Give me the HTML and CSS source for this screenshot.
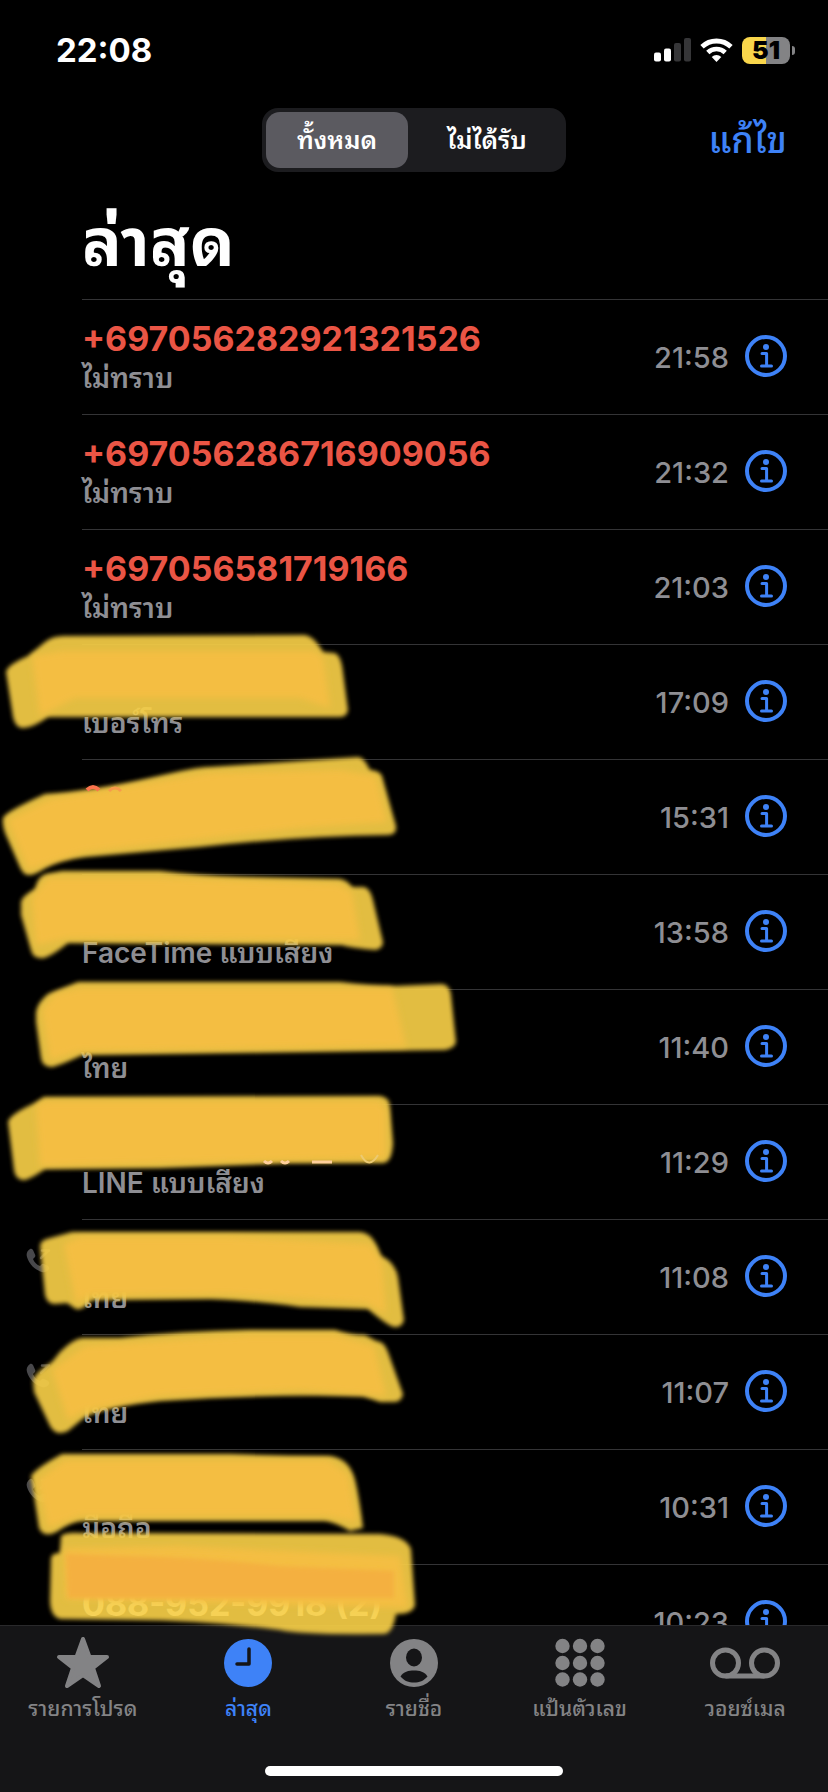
FILE: index.html
```html
<!DOCTYPE html>
<html lang="th">
<head>
<meta charset="utf-8">
<meta name="viewport" content="width=device-width, initial-scale=1">
<title>ล่าสุด</title>
<link rel="stylesheet" href="styles.css">
</head>
<body>
<svg width="0" height="0" class="defs" aria-hidden="true">
  <symbol id="info" viewBox="0 0 42 42">
    <circle cx="21" cy="21" r="19" fill="none" stroke="currentColor" stroke-width="4"/>
    <circle cx="21" cy="12" r="3" fill="currentColor"/>
    <path d="M17 18.500h4.600v12M16.500 31h10" fill="none" stroke="currentColor" stroke-width="3" stroke-linecap="round" stroke-linejoin="round"/>
  </symbol>
  <symbol id="phone" viewBox="0 0 26 26">
    <path d="M4 1C1 3 0 6 1 9c2 7 8 13 15 15 3 1 6-1 7-3 .5-1 0-2-1-3l-4-2c-1-.6-2-.4-3 1l-1 1c-3-1-6-4-7-7l1.500-1.500C9.500 8.500 9.500 7.500 9 6.500L7 2C6 .5 5 .4 4 1z" fill="currentColor"/>
    <path d="M15 10l7-7M16 2.500h7" stroke="currentColor" stroke-width="2.500" stroke-linecap="round"/>
  </symbol>
</svg>
<div class="screen">
  <header class="status">
    <span class="clock">22:08</span>
    <span class="status-icons">
      <svg width="37" height="24" viewBox="0 0 37 24" aria-hidden="true">
        <rect x="0" y="14.500" width="7" height="9" rx="2" fill="#fff"/>
        <rect x="10" y="10.500" width="7" height="13" rx="2" fill="#fff"/>
        <rect x="20" y="5" width="7" height="18.500" rx="2" fill="#363638"/>
        <rect x="30" y="0" width="7" height="23.500" rx="2" fill="#363638"/>
      </svg>
      <svg width="33" height="24" viewBox="0 0 33 24" aria-hidden="true">
        <path d="M2 8.800a21 21 0 0 1 29 0" fill="none" stroke="#fff" stroke-width="4.800"/>
        <path d="M7.800 14.500a12.500 12.500 0 0 1 17.400 0" fill="none" stroke="#fff" stroke-width="4.600"/>
        <path d="M16.500 24l-4.800-5a7 7 0 0 1 9.600 0z" fill="#fff"/>
      </svg>
      <span class="battery">51</span>
    </span>
  </header>

  <div class="toolbar">
    <fieldset class="segments">
      <input type="radio" name="filter" id="all" checked><label for="all">ทั้งหมด</label>
      <input type="radio" name="filter" id="missed"><label for="missed">ไม่ได้รับ</label>
    </fieldset>
    <button class="edit" type="button">แก้ไข</button>
  </div>

  <h1>ล่าสุด</h1>

  <main class="calls">
    <article class="call"><div class="who"><strong class="missed">+697056282921321526</strong><span>ไม่ทราบ</span></div><time>21:58</time><button type="button" aria-label="ข้อมูล"><svg><use href="#info"/></svg></button></article>
    <article class="call"><div class="who"><strong class="missed">+697056286716909056</strong><span>ไม่ทราบ</span></div><time>21:32</time><button type="button" aria-label="ข้อมูล"><svg><use href="#info"/></svg></button></article>
    <article class="call"><div class="who"><strong class="missed">+697056581719166</strong><span>ไม่ทราบ</span></div><time>21:03</time><button type="button" aria-label="ข้อมูล"><svg><use href="#info"/></svg></button></article>
    <article class="call"><div class="who"><strong></strong><span>เบอร์โทร</span></div><time>17:09</time><button type="button" aria-label="ข้อมูล"><svg><use href="#info"/></svg></button></article>
    <article class="call"><div class="who"><strong></strong><span></span></div><time>15:31</time><button type="button" aria-label="ข้อมูล"><svg><use href="#info"/></svg></button></article>
    <article class="call"><div class="who"><strong></strong><span>FaceTime แบบเสียง</span></div><time>13:58</time><button type="button" aria-label="ข้อมูล"><svg><use href="#info"/></svg></button></article>
    <article class="call"><div class="who"><strong></strong><span>ไทย</span></div><time>11:40</time><button type="button" aria-label="ข้อมูล"><svg><use href="#info"/></svg></button></article>
    <article class="call"><div class="who"><strong></strong><span>LINE แบบเสียง</span></div><time>11:29</time><button type="button" aria-label="ข้อมูล"><svg><use href="#info"/></svg></button></article>
    <article class="call"><svg class="outgoing"><use href="#phone"/></svg><div class="who"><strong></strong><span>ไทย</span></div><time>11:08</time><button type="button" aria-label="ข้อมูล"><svg><use href="#info"/></svg></button></article>
    <article class="call"><svg class="outgoing"><use href="#phone"/></svg><div class="who"><strong></strong><span>ไทย</span></div><time>11:07</time><button type="button" aria-label="ข้อมูล"><svg><use href="#info"/></svg></button></article>
    <article class="call"><svg class="outgoing"><use href="#phone"/></svg><div class="who"><strong></strong><span>มือถือ</span></div><time>10:31</time><button type="button" aria-label="ข้อมูล"><svg><use href="#info"/></svg></button></article>
    <article class="call"><div class="who"><strong>088-952-9918 (2)</strong><span></span></div><time>10:23</time><button type="button" aria-label="ข้อมูล"><svg><use href="#info"/></svg></button></article>
  </main>

  <nav class="tabs">
    <a href="#favorites"><svg viewBox="0 0 70 54" aria-hidden="true"><path d="M35 4l6.500 18H59L45 33l6 18-16-11-16 11 6-18L11 22h17.500z" fill="currentColor" stroke="currentColor" stroke-width="4" stroke-linejoin="round"/></svg>รายการโปรด</a>
    <a href="#recents" class="active" aria-current="page"><svg viewBox="0 0 70 54" aria-hidden="true"><circle cx="35" cy="28" r="24" fill="currentColor"/><path d="M36 14v15H24" fill="none" stroke="#151517" stroke-width="3.500" stroke-linecap="round" stroke-linejoin="round"/></svg>ล่าสุด</a>
    <a href="#contacts"><svg viewBox="0 0 70 54" aria-hidden="true"><circle cx="35" cy="28" r="24" fill="currentColor"/><ellipse cx="35" cy="22.500" rx="8" ry="9" fill="#151517"/><path d="M21.500 41.500c3-5 8-6 13.500-6s10.500 1 13.500 6c-4 4.500-8 6-13.500 6s-9.500-1.500-13.500-6z" fill="#151517"/></svg>รายชื่อ</a>
    <a href="#keypad"><svg viewBox="0 0 70 54" aria-hidden="true"><g fill="currentColor"><circle cx="17.500" cy="11" r="7.200"/><circle cx="35" cy="11" r="7.200"/><circle cx="52.500" cy="11" r="7.200"/><circle cx="17.500" cy="28" r="7.200"/><circle cx="35" cy="28" r="7.200"/><circle cx="52.500" cy="28" r="7.200"/><circle cx="17.500" cy="44.500" r="7.200"/><circle cx="35" cy="44.500" r="7.200"/><circle cx="52.500" cy="44.500" r="7.200"/></g></svg>แป้นตัวเลข</a>
    <a href="#voicemail"><svg viewBox="0 0 70 54" aria-hidden="true"><g fill="none" stroke="currentColor" stroke-width="5"><circle cx="15.500" cy="28" r="13"/><circle cx="54.500" cy="28" r="13"/><path d="M15.500 41h39"/></g></svg>วอยซ์เมล</a>
  </nav>
  <div class="home"></div>

  <svg class="marker" viewBox="0 0 480 1792" aria-hidden="true">
    <defs>
      <filter id="soft" x="-5%" y="-5%" width="110%" height="110%"><feGaussianBlur stdDeviation="1.900"/></filter>
      <filter id="softer" x="-5%" y="-20%" width="110%" height="140%"><feGaussianBlur stdDeviation="3"/></filter>
    </defs>
    <g class="edge" filter="url(#soft)">
      <path d="M6 672Q7 665 28 656L45 642Q52 636 64 636L305 635Q314 636 323 652L334 653Q341 654 343 672L348 710Q347 717 340 717L48 717Q31 729 22 728 15 727 13 717Z"/>
      <path d="M3 818Q5 812 45 794 90 792 150 778 200 766 210 767L358 757Q364 757 370 770 380 771 382 776L396 826Q397 835 388 835 300 836 200 847L85 857Q60 859 45 868 35 875 30 875 23 876 19 865L5 833Q2 824 3 818Z"/>
      <path d="M21 902Q22 896 35 889 38 876 46 874L62 871H160Q200 876 240 877L340 879Q347 880 352 887L364 887Q370 888 373 900L383 942Q383 948 376 950 350 948 342 945L68 943Q47 960 40 958 32 957 31 950L21 915Z"/>
      <path d="M36 1012Q38 1002 48 994L78 982 340 982Q370 986 395 986L442 984Q450 985 451 995L456 1042Q455 1048 445 1050L82 1055Q55 1068 50 1067 42 1066 41 1058L36 1022Z"/>
      <path d="M8 1122Q10 1114 35 1103L44 1097 380 1096Q390 1097 390 1108L393 1143Q392 1162 383 1163L290 1163 160 1168 45 1169Q28 1181 22 1180 15 1178 14 1170Z"/>
      <path d="M40 1246Q40 1240 50 1238L72 1232H360Q370 1232 377 1246L381 1256Q395 1262 398 1277L404 1320Q402 1328 394 1327 388 1326 368 1309L300 1307Q250 1300 210 1299L92 1300Q82 1311 76 1309L67 1303 55 1304Q47 1304 45 1295Z"/>
      <path d="M33 1380Q36 1372 52 1362L60 1352Q73 1339 82 1338L120 1338Q180 1331 250 1330L335 1330Q350 1335 365 1335L376 1341Q384 1341 388 1352L403 1394Q402 1401 395 1402L380 1402 363 1396Q260 1394 160 1401 110 1405 85 1417L68 1431Q56 1437 50 1426L34 1392Z"/>
      <path d="M31 1476Q36 1468 62 1454L230 1454Q280 1456 330 1456 346 1458 352 1472 357 1480 363 1528L350 1531Q335 1522 325 1521L82 1521Q72 1521 58 1531 44 1539 39 1528Z"/>
      <path d="M61 1536Q66 1532 80 1533L380 1534Q406 1536 411 1549L415 1605Q413 1614 396 1614 393 1633 384 1634 300 1635 280 1630 200 1620 130 1620L60 1619Q50 1616 50 1600L51 1558Q52 1553 60 1553Z"/>
    </g>
    <g fill="#f4be42" filter="url(#softer)">
      <path d="M32 656L62 651H315L323 658 330 708 300 698H75L40 716Z"/>
      <path d="M8 820L50 799 210 773 340 770 376 776 387 822 300 828 85 852 28 870Z"/>
      <path d="M32 898L48 878H160L338 884 352 892 360 940 68 938 36 945Z"/>
      <path d="M42 1010L55 994 80 988H392L406 1046 80 1051 50 1060Z"/>
      <path d="M36 1105L46 1101H380L386 1110V1158L160 1163 40 1166Z"/>
      <path d="M64 1244L80 1237H230L370 1244 382 1262 386 1314 366 1303 230 1294 90 1295 76 1304Z"/>
      <path d="M52 1370L85 1346 250 1335H335L374 1346 386 1396 300 1390 160 1396 84 1411 68 1420Z"/>
      <path d="M38 1480L65 1460H328L348 1474 357 1522 325 1516H80L48 1528Z"/>
      <path d="M64 1548L180 1546 400 1556 408 1608 200 1602 66 1599Z"/>
    </g>
    <path d="M66 1554L120 1556Q200 1557 280 1566L394 1571V1598H68Z" fill="#f4b03f" filter="url(#soft)"/>
    <path d="M87 790Q93 784 99 790" fill="none" stroke="#fb744d" stroke-width="4"/>
    <path d="M109 791Q115 785 121 791" fill="none" stroke="#f89a4c" stroke-width="3"/>
    <path d="M264 1161q4 4 8 0M281 1161q4 4 8 0M312 1162h20" fill="none" stroke="#ffcf9b" stroke-width="3"/>
    <path d="M361 1155q8 15 17 0" fill="none" stroke="#ecca72" stroke-width="2"/>
  </svg>
</div>
</body>
</html>
```
FILE: styles.css
```css
* { box-sizing: border-box; }
body {
  margin: 0;
  background: #000;
  color: #fff;
  font-family: Inter, "Noto Sans Thai Looped", Loma, Waree, Garuda, "Noto Sans Thai", "Noto Sans", sans-serif;
}
button { padding: 0; border: 0; background: none; font: inherit; cursor: pointer; }
.defs { position: absolute; }
.screen {
  position: relative;
  display: flex;
  flex-direction: column;
  height: 100vh;
  overflow: hidden;
}
.status {
  display: flex;
  justify-content: space-between;
  align-items: center;
  height: 100px;
  padding: 0 38px 0 56px;
}
.clock { font-size: 33px; font-weight: 700; }
.status-icons { display: flex; align-items: center; gap: 9px; }
.battery {
  position: relative;
  width: 48px;
  height: 27px;
  border-radius: 8px;
  background: linear-gradient(90deg, #f9d64b 50%, #838385 50%);
  color: #000;
  font-size: 25px;
  font-weight: 900;
  line-height: 27px;
  text-align: center;
}
.battery::after {
  content: "";
  position: absolute;
  top: 9px;
  right: -5px;
  width: 3px;
  height: 9px;
  border-radius: 0 4px 4px 0;
  background: #838385;
}
.toolbar {
  display: grid;
  grid-template-columns: 1fr auto 1fr;
  align-items: center;
  height: 80px;
  padding: 0 41px;
}
.segments {
  display: grid;
  grid-column: 2;
  grid-template-columns: 142px 150px;
  gap: 4px;
  margin: 0;
  padding: 4px;
  border: 0;
  border-radius: 16px;
  background: #1c1c1f;
}
.segments input { position: absolute; opacity: 0; }
.segments label {
  height: 56px;
  border-radius: 14px;
  font-size: 25px;
  font-weight: 600;
  line-height: 56px;
  text-align: center;
}
.segments input:checked + label { background: #5b5a60; }
.edit {
  justify-self: end;
  color: #3e82f7;
  font-size: 36px;
  font-weight: 500;
  line-height: 56px;
}
h1 {
  height: 119px;
  margin: 0;
  padding-left: 82px;
  font-size: 66px;
  font-weight: 700;
  line-height: 124px;
}
.calls { flex: 1; min-height: 0; overflow: hidden; }
.call {
  position: relative;
  display: flex;
  align-items: flex-start;
  height: 115px;
  margin-left: 82px;
  padding-right: 41px;
  border-top: 1px solid #343436;
}
.who { display: flex; flex: 1; flex-direction: column; padding-top: 20px; }
.who strong { height: 38px; font-size: 34px; font-weight: 700; line-height: 38px; }
.who span { height: 40px; color: #8e8e93; font-size: 28px; font-weight: 600; line-height: 40px; }
.who .missed { color: #ea5545; }
.call time {
  padding-top: 40px;
  color: #8e8e93;
  font-size: 29px;
  font-weight: 500;
  line-height: 36px;
}
.call button { margin: 35px 0 0 16px; color: #3e82f7; }
.call button svg { display: block; width: 42px; height: 42px; }
.outgoing {
  position: absolute;
  top: 28px;
  left: -56px;
  width: 26px;
  height: 26px;
  color: #48484b;
}
.tabs {
  display: grid;
  grid-template-columns: repeat(5, 1fr);
  height: 141px;
  padding-top: 9px;
  border-top: 1px solid #29292b;
  background: #151517;
}
.tabs a {
  display: flex;
  flex-direction: column;
  align-items: center;
  color: #838385;
  font-size: 21px;
  font-weight: 500;
  line-height: 40px;
  text-decoration: none;
}
.tabs .active { color: #3e82f7; }
.tabs svg { width: 70px; height: 54px; }
.home { height: 26px; background: #151517; }
.home::before {
  content: "";
  display: block;
  width: 36%;
  height: 10px;
  margin: 0 auto;
  border-radius: 5px;
  background: #fff;
}
.marker {
  position: absolute;
  top: 0;
  left: 0;
  width: 480px;
  height: 1792px;
  pointer-events: none;
}
.edge { fill: #f6ce46; opacity: .92; }
```
